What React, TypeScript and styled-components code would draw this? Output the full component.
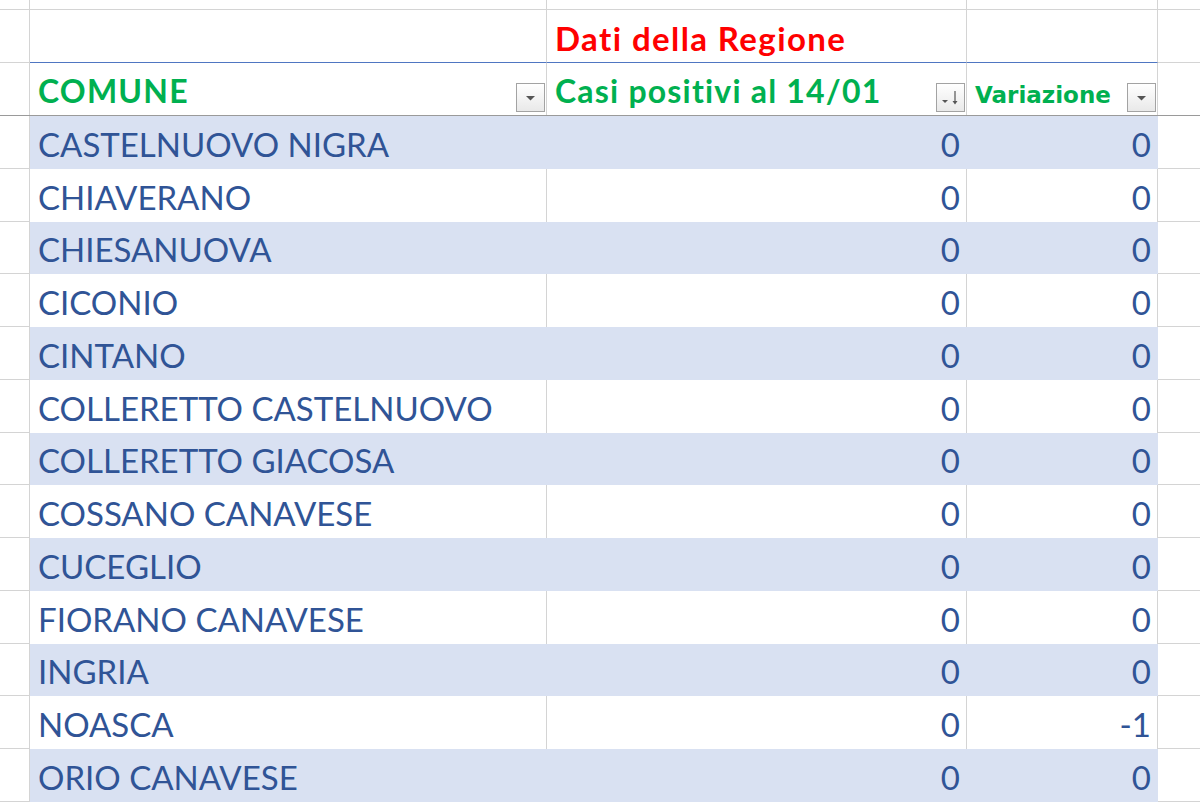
import React, { ReactElement } from 'react';
import styled, { createGlobalStyle, css } from 'styled-components';

const GlobalStyle = createGlobalStyle`
    * { box-sizing: border-box; }
    html, body { margin: 0; padding: 0; background: #ffffff; overflow: hidden; }
    body { font-family: Lato, "Open Sans", sans-serif; }
`;

const GRID = '#d4d4d4';
const BAND = '#d9e1f2';
const INK = '#305496';
const GREEN = '#00b050';
const COLUMNS = '30px 517px 420px 191px 1fr';

interface IRowData {
    name: string;
    positives: number;
    change: number;
}

const rows: IRowData[] = [
    { name: 'CASTELNUOVO NIGRA', positives: 0, change: 0 },
    { name: 'CHIAVERANO', positives: 0, change: 0 },
    { name: 'CHIESANUOVA', positives: 0, change: 0 },
    { name: 'CICONIO', positives: 0, change: 0 },
    { name: 'CINTANO', positives: 0, change: 0 },
    { name: 'COLLERETTO CASTELNUOVO', positives: 0, change: 0 },
    { name: 'COLLERETTO GIACOSA', positives: 0, change: 0 },
    { name: 'COSSANO CANAVESE', positives: 0, change: 0 },
    { name: 'CUCEGLIO', positives: 0, change: 0 },
    { name: 'FIORANO CANAVESE', positives: 0, change: 0 },
    { name: 'INGRIA', positives: 0, change: 0 },
    { name: 'NOASCA', positives: 0, change: -1 },
    { name: 'ORIO CANAVESE', positives: 0, change: 0 },
];

const Sheet = styled.div`
    width: 1200px;
    height: 802px;
    overflow: hidden;
    display: flex;
    flex-direction: column;
`;

const Row = styled.div<{ $height: number; $freeze?: boolean }>`
    display: grid;
    grid-template-columns: ${COLUMNS};
    height: ${({ $height }) => $height}px;
    flex-shrink: 0;
    ${({ $freeze }) =>
        $freeze &&
        css`
            border-bottom: 1px solid #9a9a9a;
        `}
`;

const Gutter = styled.div<{ $divider?: boolean; $noBottom?: boolean }>`
    border-bottom: ${({ $noBottom }) => ($noBottom ? 'none' : `1px solid ${GRID}`)};
    border-right: ${({ $divider }) => ($divider ? `1px solid ${GRID}` : 'none')};
`;

const TitleCell = styled.div<{ $edge?: string }>`
    display: flex;
    align-items: flex-end;
    padding: 0 8px 7px;
    border-right: 1px solid ${GRID};
    border-bottom: 1px solid ${({ $edge }) => $edge || GRID};
`;

const Title = styled.span`
    font-family: Lato, "Open Sans", sans-serif;
    font-weight: 700;
    font-size: 33px;
    letter-spacing: 1.4px;
    line-height: 1;
    color: #ff0000;
`;

const HeadCell = styled.div`
    display: flex;
    align-items: flex-end;
    justify-content: space-between;
    padding: 0 1px 3px 8px;
    border-right: 1px solid ${GRID};
`;

const HeadLabel = styled.span<{ $small?: boolean }>`
    font-family: ${({ $small }) => ($small ? '"DejaVu Sans", Verdana, sans-serif' : 'Lato, "Open Sans", sans-serif')};
    font-weight: 700;
    font-size: ${({ $small }) => ($small ? 23 : 32)}px;
    letter-spacing: ${({ $small }) => ($small ? 0 : 1.2)}px;
    line-height: 1;
    color: ${GREEN};
    padding-bottom: ${({ $small }) => ($small ? 5 : 5)}px;
    white-space: nowrap;
`;

const FilterButton = styled.div`
    width: 29px;
    height: 29px;
    flex-shrink: 0;
    border: 1px solid #a3a3a3;
    background: linear-gradient(#ffffff, #e9e9e9);
    display: flex;
    align-items: center;
    justify-content: center;
`;

const DataCell = styled.div<{ $band: boolean; $right?: boolean }>`
    display: flex;
    align-items: center;
    justify-content: ${({ $right }) => ($right ? 'flex-end' : 'flex-start')};
    padding: 4px ${({ $right }) => ($right ? 6 : 8)}px 0;
    background: ${({ $band }) => ($band ? BAND : '#ffffff')};
    border-right: 1px solid ${({ $band }) => ($band ? BAND : GRID)};
    font-family: Lato, "Open Sans", sans-serif;
    font-size: 33px;
    line-height: 1;
    color: ${INK};
    white-space: nowrap;
`;

const DropIcon = (): ReactElement => (
    <svg width="27" height="27" viewBox="0 0 27 27">
        <polygon points="9,12 18,12 13.5,16.5" fill="#555" />
    </svg>
);

const SortIcon = (): ReactElement => (
    <svg width="27" height="27" viewBox="0 0 27 27">
        <polygon points="5,16 11,16 8,19" fill="#555" />
        <line x1="18" y1="7" x2="18" y2="19" stroke="#555" strokeWidth="1.2" />
        <polygon points="15.5,17 20.5,17 18,20.5" fill="#555" />
    </svg>
);

const App = (): ReactElement => {
    const rowHeight = 52.75;
    return (
        <Sheet>
            <GlobalStyle />
            <Row $height={10}>
                <Gutter $divider />
                <Gutter $divider />
                <Gutter $divider />
                <Gutter $divider />
                <Gutter />
            </Row>
            <Row $height={53}>
                <Gutter $divider />
                <TitleCell $edge="#4f76c2" />
                <TitleCell $edge="#4f76c2">
                    <Title>Dati della Regione</Title>
                </TitleCell>
                <TitleCell $edge="#4f76c2" />
                <Gutter />
            </Row>
            <Row $height={53} $freeze>
                <Gutter $divider $noBottom />
                <HeadCell>
                    <HeadLabel>COMUNE</HeadLabel>
                    <FilterButton>
                        <DropIcon />
                    </FilterButton>
                </HeadCell>
                <HeadCell>
                    <HeadLabel>Casi positivi al 14/01</HeadLabel>
                    <FilterButton>
                        <SortIcon />
                    </FilterButton>
                </HeadCell>
                <HeadCell>
                    <HeadLabel $small>Variazione</HeadLabel>
                    <FilterButton>
                        <DropIcon />
                    </FilterButton>
                </HeadCell>
                <Gutter $noBottom />
            </Row>
            {rows.map(
                (row: IRowData, index: number): ReactElement => {
                    const band = index % 2 === 0;
                    return (
                        <Row key={row.name} $height={rowHeight}>
                            <Gutter $divider />
                            <DataCell $band={band}>{row.name}</DataCell>
                            <DataCell $band={band} $right>
                                {row.positives}
                            </DataCell>
                            <DataCell $band={band} $right>
                                {row.change}
                            </DataCell>
                            <Gutter />
                        </Row>
                    );
                }
            )}
        </Sheet>
    );
};

export default App;
